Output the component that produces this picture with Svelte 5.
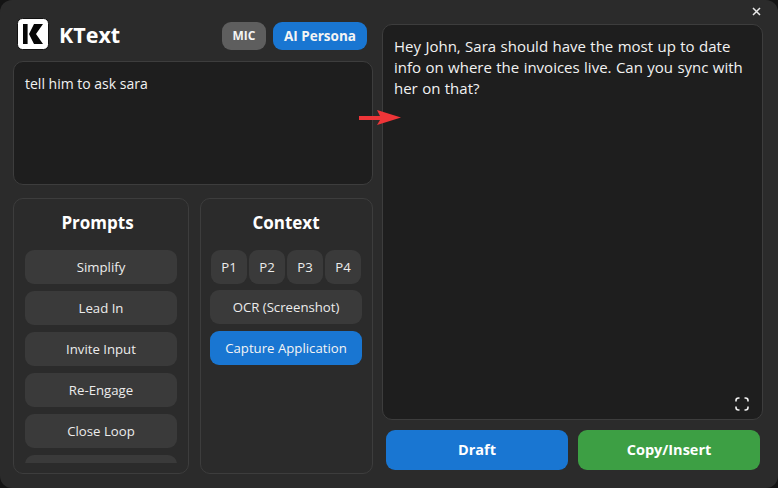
<script>
  // the sixth prompt is scrolled out of view, only its top edge shows
  const prompts = ["Simplify", "Lead In", "Invite Input", "Re-Engage", "Close Loop", ""];
  const pages = ["P1", "P2", "P3", "P4"];
</script>

<div class="window">
  <button class="close" aria-label="Close">
    <svg width="9" height="9" viewBox="0 0 9 9"><path d="M1 1l7 7M8 1L1 8" stroke="#e8e8e8" stroke-width="1.5" fill="none" /></svg>
  </button>

  <div class="left">
    <header class="top">
      <svg class="logo" width="32" height="32" viewBox="0 0 32 32">
        <rect x="0.5" y="0.5" width="31" height="31" rx="5" fill="#fff" stroke="#111" />
        <rect x="6" y="6" width="4.6" height="20" fill="#060606" />
        <path d="M17 6H26L19 16L26 26H17L12 16z" fill="#060606" />
      </svg>
      <h1>KText</h1>
      <div class="toggles">
        <button class="pill mic">MIC</button>
        <button class="pill persona">AI Persona</button>
      </div>
    </header>

    <div class="input box">tell him to ask sara</div>

    <div class="panels">
      <section class="panel prompts">
        <h2>Prompts</h2>
        <div class="list">
          {#each prompts as p}
            <button class="btn">{p}</button>
          {/each}
        </div>
      </section>
      <section class="panel context">
        <h2>Context</h2>
        <div class="pages">
          {#each pages as p}
            <button class="btn">{p}</button>
          {/each}
        </div>
        <button class="btn wide">OCR (Screenshot)</button>
        <button class="btn wide active">Capture Application</button>
      </section>
    </div>
  </div>

  <div class="right">
    <div class="output box">
      Hey John, Sara should have the most up to date<br />
      info on where the invoices live. Can you sync with<br />
      her on that?
      <svg class="expand" width="16" height="16" viewBox="0 0 16 16" fill="none" stroke="#f2f2f2" stroke-width="1.6">
        <path d="M2 5.5V4.5A2.5 2.5 0 0 1 4.5 2H5.5M10.5 2H11.5A2.5 2.5 0 0 1 14 4.5V5.5M14 10.5V11.5A2.5 2.5 0 0 1 11.5 14H10.5M5.5 14H4.5A2.5 2.5 0 0 1 2 11.5V10.5" />
      </svg>
    </div>
    <div class="actions">
      <button class="action draft">Draft</button>
      <button class="action copy">Copy/Insert</button>
    </div>
  </div>

  <svg class="arrow" width="42" height="16" viewBox="0 0 42 16">
    <path d="M0 6H21L18 0L42 7.5L18 15L21 10H0z" fill="#ee3538" />
  </svg>
</div>

<style>
  :global(body) {
    background: #141414;
  }

  .window {
    position: relative;
    box-sizing: border-box;
    width: 778px;
    height: 488px;
    padding: 18px 15px 14px 13px;
    display: flex;
    gap: 9px;
    background: #2b2b2b;
    border-radius: 12px;
    overflow: hidden;
    color: #f2f2f2;
    font-family: "Open Sans", "Noto Sans", sans-serif;
    font-size: 14px;
  }

  button {
    font-family: inherit;
    border: none;
    padding: 0;
    color: inherit;
    cursor: pointer;
  }

  .close {
    position: absolute;
    top: 7px;
    right: 17px;
    width: 9px;
    height: 9px;
    background: none;
    display: flex;
  }

  .left {
    width: 360px;
    display: flex;
    flex-direction: column;
  }

  .top {
    height: 32px;
    padding-left: 4px;
    display: flex;
    align-items: center;
  }

  .logo {
    flex: none;
  }

  h1 {
    margin: 0 0 0 10px;
    font-size: 21.5px;
    font-weight: 700;
    color: #fff;
  }

  .toggles {
    margin-left: auto;
    margin-right: 6px;
    display: flex;
    gap: 7px;
    margin-top: 3px;
  }

  .pill {
    height: 28px;
    border-radius: 9px;
    font-size: 13.5px;
    font-weight: 700;
    color: #f4f4f4;
  }

  .mic {
    width: 44px;
    background: #5e5e5e;
    font-size: 12px;
  }

  .persona {
    width: 94px;
    background: #1976d2;
  }

  .box {
    box-sizing: border-box;
    background: #1e1e1e;
    border: 1px solid #3d3d3d;
    border-radius: 10px;
  }

  .input {
    height: 124px;
    margin-top: 11px;
    padding: 11px;
    font-size: 14px;
    line-height: 22px;
  }

  .panels {
    margin-top: 13px;
    height: 276px;
    display: flex;
    gap: 11px;
  }

  .panel {
    box-sizing: border-box;
    height: 100%;
    border: 1px solid #3d3d3d;
    border-radius: 10px;
    overflow: hidden;
  }

  .prompts {
    width: 176px;
    padding: 0 11px;
  }

  .context {
    width: 173px;
    padding: 0 10px 0 9px;
    display: flex;
    flex-direction: column;
    gap: 7px;
  }

  h2 {
    margin: 0;
    height: 51px;
    line-height: 48px;
    text-align: center;
    font-size: 17px;
    font-weight: 700;
    color: #fff;
  }

  .prompts h2 {
    padding-right: 7px;
  }

  .context h2 {
    height: 44px;
  }

  .prompts .list {
    height: 213px;
    overflow: hidden;
    display: flex;
    flex-direction: column;
    gap: 7px;
  }

  .prompts .btn {
    width: 152px;
  }

  .btn {
    flex: none;
    height: 34px;
    background: #3a3a3a;
    border-radius: 9px;
    font-size: 13.2px;
    color: #ececec;
  }

  .pages {
    display: flex;
    gap: 2px;
    padding: 0 1px;
    margin-bottom: -1px;
  }

  .pages .btn {
    width: 36px;
  }

  .active {
    background: #1976d2;
    color: #f4f4f4;
  }

  .right {
    flex: 1;
    display: flex;
    flex-direction: column;
  }

  .output {
    position: relative;
    height: 396px;
    margin-top: 6px;
    padding: 11px;
    font-size: 15px;
    line-height: 21px;
    word-spacing: 0.5px;
    white-space: nowrap;
  }

  .expand {
    position: absolute;
    right: 12px;
    bottom: 7px;
  }

  .actions {
    margin-top: 10px;
    padding: 0 3px 0 4px;
    display: flex;
    gap: 10px;
  }

  .action {
    flex: 1;
    height: 40px;
    padding-bottom: 2px;
    border-radius: 9px;
    font-size: 14.5px;
    font-weight: 700;
    color: #fff;
  }

  .draft {
    background: #1976d2;
  }

  .copy {
    background: #3d9f44;
  }

  .arrow {
    position: absolute;
    left: 359px;
    top: 110px;
  }
</style>
